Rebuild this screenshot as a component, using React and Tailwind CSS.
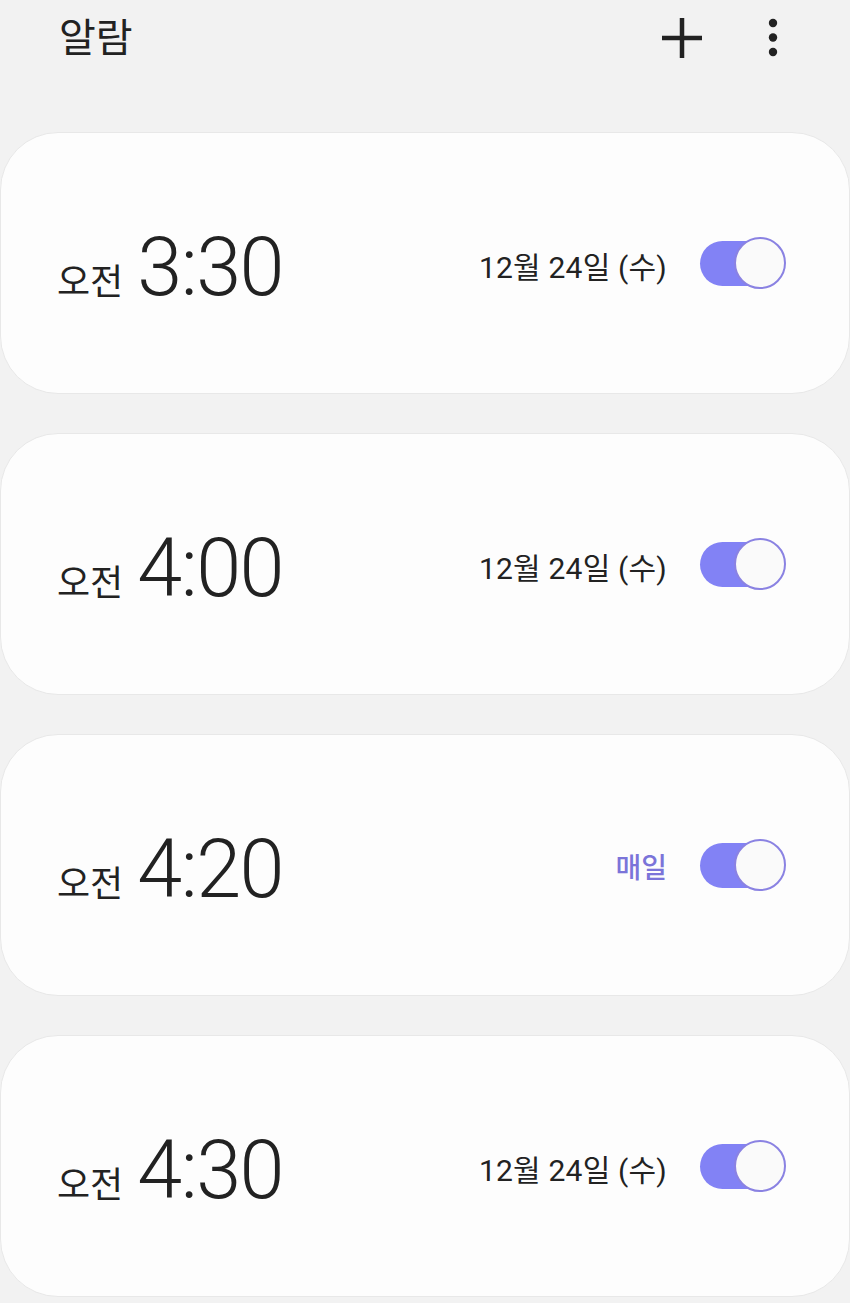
import React from 'react';

const alarms = [
  { time: '3:30', label: '12월 24일 (수)', repeat: false },
  { time: '4:00', label: '12월 24일 (수)', repeat: false },
  { time: '4:20', label: '매일', repeat: true },
  { time: '4:30', label: '12월 24일 (수)', repeat: false },
];

const Toggle = () => (
  <div className="relative w-[86px] h-[52px] flex items-center">
    <div className="absolute left-0 top-[4px] w-[70px] h-[45px] rounded-full bg-[#8282f5]" />
    <div className="absolute right-0 top-0 w-[52px] h-[52px] rounded-full bg-[#fafafa] border-2 border-[#8a82e2]" />
  </div>
);

const AlarmCard = ({ time, label, repeat }) => (
  <div className="h-[262px] rounded-[58px] bg-[#fdfdfd] border border-[#e8e8e8] flex items-center pl-[56px] pr-[63px]">
    <div className="flex items-baseline pt-[10px]">
      <span className="text-[36px] text-[#222] mr-[14px]">오전</span>
      <span className="text-[81px] font-light text-[#222] leading-none tracking-[-1.5px]">{time}</span>
    </div>
    <div className="ml-auto flex items-center">
      <span
        className={
          repeat
            ? 'text-[28px] font-medium text-[#7b74d9] mr-[33px] pt-[8px]'
            : 'text-[30px] text-[#222] mr-[33px] pt-[8px] tracking-[0.2px]'
        }
      >
        {label}
      </span>
      <Toggle />
    </div>
  </div>
);

export default function App() {
  return (
    <div
      className="min-h-[1303px] w-[850px] bg-[#f2f2f2] overflow-hidden"
      style={{ fontFamily: 'Roboto, "Noto Sans CJK KR", sans-serif' }}
    >
      <div className="h-[132px] flex items-start pl-[59px] pr-[72px] pt-[10px]">
        <h1 className="text-[40px] text-[#222] leading-[58px]">알람</h1>
        <div className="ml-auto flex items-center gap-[64px] pt-[6px]">
          <svg width="44" height="44" viewBox="0 0 44 44">
            <path d="M22 2v40M2 22h40" stroke="#222" strokeWidth="4.5" />
          </svg>
          <svg width="10" height="44" viewBox="0 0 10 44">
            <circle cx="5" cy="7" r="4.2" fill="#222" />
            <circle cx="5" cy="21.5" r="4.2" fill="#222" />
            <circle cx="5" cy="36" r="4.2" fill="#222" />
          </svg>
        </div>
      </div>
      <div className="flex flex-col gap-[39px]">
        {alarms.map((a) => (
          <AlarmCard key={a.time} {...a} />
        ))}
      </div>
    </div>
  );
}
